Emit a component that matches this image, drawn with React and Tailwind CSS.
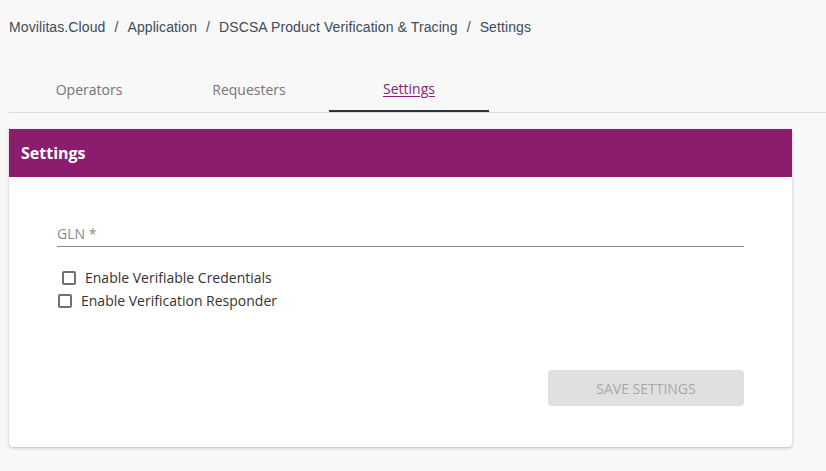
export default function App() {
  const tabs = ["Operators", "Requesters", "Settings"];
  const active = "Settings";

  return (
    <div className="min-h-[471px] w-full bg-[#f8f8f8] font-['Open_Sans',sans-serif]">
      {/* breadcrumb */}
      <div className="flex items-center gap-[9px] pl-[9px] pt-[18px] text-[14px] leading-[18px] tracking-[0.1px] text-[#3e4b5a] font-['Liberation_Sans',Arial,sans-serif]">
        <span>Movilitas.Cloud</span>
        <span>/</span>
        <span>Application</span>
        <span>/</span>
        <span>DSCSA Product Verification &amp; Tracing</span>
        <span>/</span>
        <span>Settings</span>
      </div>

      {/* tabs */}
      <div className="ml-[9px] mt-[36px] flex border-b border-[#dcdcdc]">
        {tabs.map((t) => (
          <div
            key={t}
            className={`flex h-[40px] w-[160px] items-center justify-center pb-[5px] text-[14px] ${
              t === active
                ? "border-b-2 border-[#2b3440] text-[#8b1d6e] underline underline-offset-2"
                : "text-[#757575]"
            }`}
          >
            {t}
          </div>
        ))}
      </div>

      {/* card */}
      <div className="ml-[9px] mt-[16px] w-[783px] rounded-b-[4px] bg-white shadow-[0_1px_3px_rgba(0,0,0,0.25)]">
        <div className="flex h-[48px] items-center bg-[#8b1d6e] px-[12px] text-[16px] font-bold text-white">
          Settings
        </div>
        <div className="px-[48px] pb-[41px] pt-[47px]">
          <div className="border-b border-[#8a8a8a] pb-[2px] text-[14px] leading-[20px] text-[#8a8a8a]">
            GLN *
          </div>

          <div className="mt-[24px] flex items-center">
            <span className="ml-[5px] h-[14px] w-[14px] rounded-[2px] border-2 border-[#707070]" />
            <span className="ml-[9px] text-[14px] leading-[14px] text-[#333333]">
              Enable Verifiable Credentials
            </span>
          </div>
          <div className="mt-[9px] flex items-center">
            <span className="ml-[1px] h-[14px] w-[14px] rounded-[2px] border-2 border-[#707070]" />
            <span className="ml-[9px] text-[14px] leading-[14px] text-[#333333]">
              Enable Verification Responder
            </span>
          </div>

          <div className="mt-[62px] flex justify-end">
            <button
              disabled
              className="h-[36px] w-[196px] rounded-[4px] bg-[#e0e0e0] text-[14px] text-[#a8a8a8]"
            >
              SAVE SETTINGS
            </button>
          </div>
        </div>
      </div>
    </div>
  );
}
